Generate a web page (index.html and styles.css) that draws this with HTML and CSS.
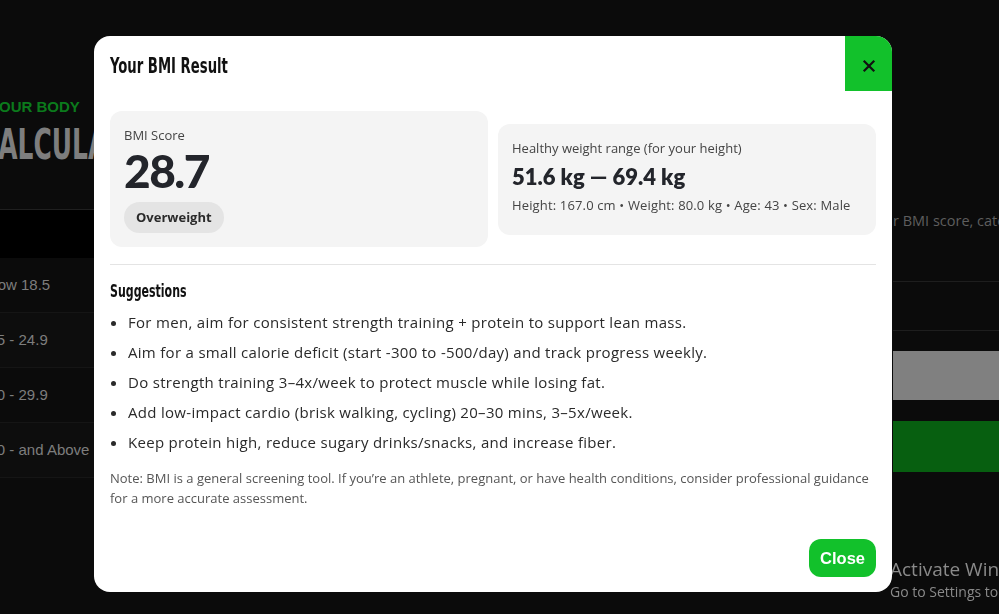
FILE: index.html
```html
<!DOCTYPE html>
<html lang="en">
<head>
<meta charset="utf-8">
<title>BMI Result</title>
<link rel="stylesheet" href="styles.css">
</head>
<body>
<div class="page">
  <section class="left-col">
    <p class="eyebrow">Your Body</p>
    <h1 class="page-title">CALCULATOR</h1>
    <div class="table">
      <div class="thead"></div>
      <div class="row">Below 18.5</div>
      <div class="row alt">18.5 - 24.9</div>
      <div class="row">25.0 - 29.9</div>
      <div class="row alt">30.0 - and Above</div>
    </div>
  </section>
  <section class="right-col">
    <p class="intro">r BMI score, category and healthy range.</p>
    <div class="field"></div>
    <div class="btn-gray"></div>
    <div class="btn-green"></div>
  </section>
</div>

<div class="watermark">
  <div class="wm-title">Activate Windows</div>
  <div class="wm-sub">Go to Settings to activate Windows.</div>
</div>

<div class="modal" role="dialog" aria-label="Your BMI Result">
  <header class="modal-head">
    <h2 class="modal-title">Your BMI Result</h2>
    <button class="x-btn" aria-label="Close">
      <svg width="14" height="14" viewBox="0 0 14 14"><path d="M2.5 2.5 L11.5 11.5 M11.5 2.5 L2.5 11.5" stroke="#111" stroke-width="2.2" stroke-linecap="square"/></svg>
    </button>
  </header>
  <div class="modal-body">
    <div class="cards">
      <div class="card score-card">
        <div class="label">BMI Score</div>
        <div class="score">28.7</div>
        <span class="badge">Overweight</span>
      </div>
      <div class="card range-card">
        <div class="label">Healthy weight range (for your height)</div>
        <div class="range">51.6 kg — 69.4 kg</div>
        <div class="details">Height: 167.0 cm • Weight: 80.0 kg • Age: 43 • Sex: Male</div>
      </div>
    </div>
    <hr class="divider">
    <h3 class="sugg-title">Suggestions</h3>
    <ul class="sugg-list">
      <li>For men, aim for consistent strength training + protein to support lean mass.</li>
      <li>Aim for a small calorie deficit (start -300 to -500/day) and track progress weekly.</li>
      <li>Do strength training 3–4x/week to protect muscle while losing fat.</li>
      <li>Add low-impact cardio (brisk walking, cycling) 20–30 mins, 3–5x/week.</li>
      <li>Keep protein high, reduce sugary drinks/snacks, and increase fiber.</li>
    </ul>
    <p class="note">Note: BMI is a general screening tool. If you’re an athlete, pregnant, or have health conditions, consider professional guidance for a more accurate assessment.</p>
  </div>
  <footer class="modal-foot">
    <button class="close-btn">Close</button>
  </footer>
</div>
</body>
</html>
```
FILE: styles.css
```css
* { box-sizing: border-box; }
html, body {
  margin: 0;
  padding: 0;
  width: 999px;
  height: 614px;
  overflow: hidden;
  background: #0b0b0b;
  font-family: "Open Sans", "Liberation Sans", sans-serif;
}

/* ---------- background page ---------- */
.page {
  display: grid;
  grid-template-columns: 560px 1fr;
  column-gap: 344px;
  margin-left: -11px;
  height: 614px;
}
.left-col {
  padding-top: 98px;
  overflow: hidden;
}
.eyebrow {
  margin: 0;
  font-family: "Liberation Sans", Arial, sans-serif;
  font-weight: 700;
  font-size: 15px;
  line-height: 17px;
  text-transform: uppercase;
  color: #0b7a1c;
}
.page-title {
  margin: 6px 0 0 -9px;
  font-family: "DejaVu Sans Condensed", "DejaVu Sans", sans-serif;
  font-weight: 700;
  font-size: 42px;
  line-height: 48px;
  color: #7e7e7e;
  transform: scaleX(0.66);
  transform-origin: left center;
}
.table {
  margin-top: 40px;
  margin-left: -13px;
  border-top: 1px solid #1f1f1f;
}
.thead {
  height: 48px;
  background: #000;
}
.row {
  height: 55px;
  display: flex;
  align-items: center;
  font-family: "Liberation Sans", Arial, sans-serif;
  font-size: 15px;
  color: #7d7d7d;
  background: #0b0b0b;
  border-bottom: 1px solid #151515;
  padding-bottom: 2px;
}
.row.alt { background: #0d0d0d; }

.right-col {
  padding-top: 211px;
  overflow: hidden;
}
.intro {
  margin: 0;
  height: 20px;
  font-size: 14.5px;
  line-height: 20px;
  color: #5e5e5e;
  white-space: nowrap;
}
.field {
  margin-top: 50px;
  height: 50px;
  border-top: 1px solid #1e1e1e;
  border-bottom: 1px solid #1e1e1e;
}
.btn-gray {
  margin-top: 20px;
  height: 49px;
  background: #808080;
}
.btn-green {
  margin-top: 21px;
  height: 51px;
  background: #075f10;
}

.watermark {
  position: fixed;
  left: 890px;
  top: 557px;
  color: #8a8a8a;
  font-family: "Open Sans", "Liberation Sans", sans-serif;
  white-space: nowrap;
}
.wm-title { font-size: 19px; line-height: 25px; }
.wm-sub { font-size: 14px; line-height: 20px; }

/* ---------- modal ---------- */
.modal {
  position: fixed;
  left: 94px;
  top: 36px;
  width: 798px;
  height: 556px;
  background: #fff;
  border-radius: 16px;
  overflow: hidden;
  display: flex;
  flex-direction: column;
  color: #222;
}
.modal-head {
  height: 55px;
  display: flex;
  align-items: center;
  justify-content: space-between;
  padding-left: 16px;
}
.modal-title {
  margin: 0;
  font-family: "DejaVu Sans Condensed", "DejaVu Sans", sans-serif;
  font-weight: 700;
  font-size: 21px;
  color: #111;
  padding-top: 4px;
  transform: scaleX(0.7);
  transform-origin: left center;
}
.x-btn {
  width: 47px;
  height: 55px;
  border: 0;
  padding: 4px 0 0;
  background: #12c12b;
  display: flex;
  align-items: center;
  justify-content: center;
  cursor: pointer;
}
.modal-body {
  flex: 1;
  padding: 20px 16px 0;
}
.cards {
  display: flex;
  gap: 10px;
  align-items: center;
}
.card {
  flex: 1;
  background: #f4f4f4;
  border-radius: 12px;
  padding: 14px;
}
.score-card { height: 136px; padding-top: 15px; }
.range-card { height: 111px; padding-top: 15px; }
.label {
  font-size: 13px;
  line-height: 18px;
  color: #444;
}
.score {
  font-family: "Lato", sans-serif;
  font-weight: 900;
  font-size: 46px;
  line-height: 46px;
  letter-spacing: -1.5px;
  color: #23252b;
  margin-top: 4px;
}
.badge {
  display: inline-block;
  margin-top: 8px;
  height: 31px;
  line-height: 31px;
  padding: 0 12px;
  border-radius: 16px;
  background: #e4e4e4;
  font-size: 13px;
  font-weight: 700;
  color: #2a2a2a;
}
.range {
  margin-top: 7px;
  font-family: "Lato", sans-serif;
  font-weight: 800;
  font-size: 22px;
  line-height: 26px;
  color: #23252b;
}
.details {
  margin-top: 6px;
  font-size: 13px;
  letter-spacing: 0.15px;
  line-height: 18px;
  color: #444;
}
.divider {
  margin: 17px 0 0;
  border: 0;
  border-top: 1px solid #e4e4e4;
}
.sugg-title {
  margin: 15px 0 0;
  font-family: "DejaVu Sans Condensed", "DejaVu Sans", sans-serif;
  font-weight: 700;
  font-size: 17px;
  line-height: 22px;
  color: #111;
  transform: scaleX(0.72);
  transform-origin: left center;
}
.sugg-list {
  margin: 5px 0 0;
  padding-left: 18px;
  font-size: 15px;
  letter-spacing: 0.3px;
  line-height: 30px;
  color: #2a2a2a;
}
.note {
  margin: 11px 0 0;
  font-size: 13px;
  line-height: 20px;
  color: #555;
}
.modal-foot {
  display: flex;
  justify-content: flex-end;
  padding: 0 16px 15px;
}
.close-btn {
  height: 38px;
  padding: 0 11px;
  border: 0;
  border-radius: 12px;
  background: #12c12b;
  color: #fff;
  font-family: "Liberation Sans", Arial, sans-serif;
  font-size: 16.5px;
  font-weight: 600;
  cursor: pointer;
}
```
